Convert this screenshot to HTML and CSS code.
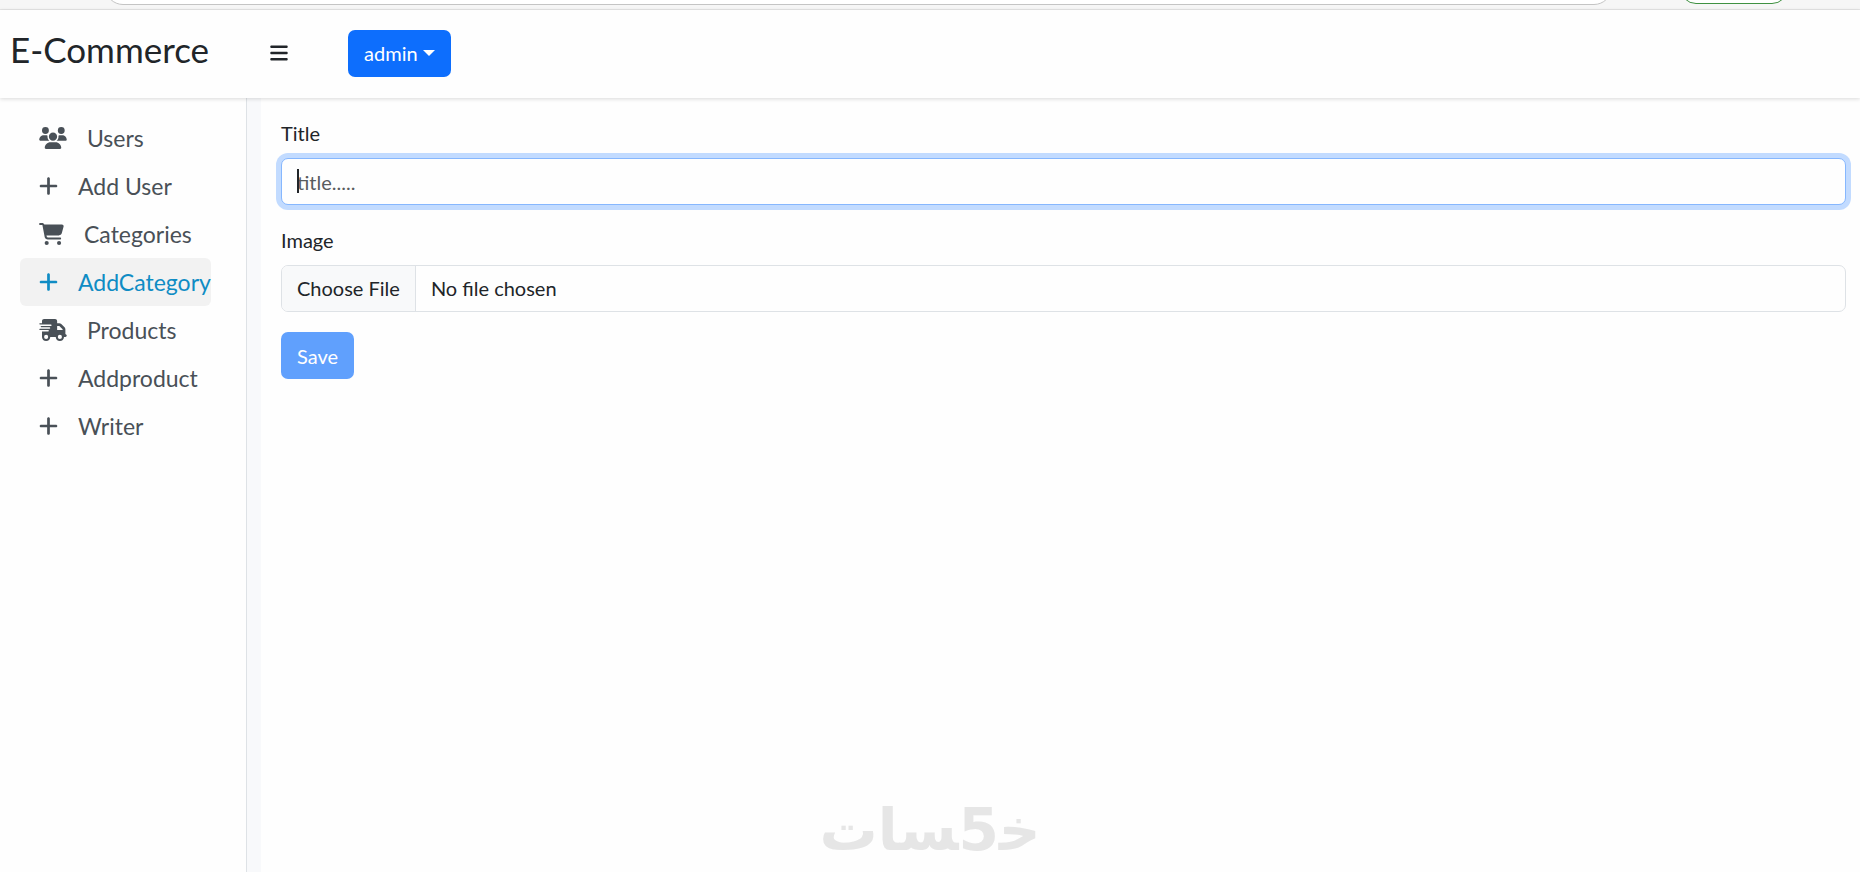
FILE: index.html
```html
<!DOCTYPE html>
<html lang="en">
<head>
  <meta charset="UTF-8" />
  <meta name="viewport" content="width=device-width, initial-scale=1" />
  <title>E-Commerce</title>
  <link rel="stylesheet" href="styles.css">
</head>
<body>

  <!-- shared icons -->
  <svg class="sprite" aria-hidden="true">
    <symbol id="icon-plus" viewBox="0 0 448 512">
      <path d="M256 80c0-17.7-14.3-32-32-32s-32 14.3-32 32V224H48c-17.7 0-32 14.3-32 32s14.3 32 32 32H192V432c0 17.7 14.3 32 32 32s32-14.3 32-32V288H400c17.7 0 32-14.3 32-32s-14.3-32-32-32H256V80z"/>
    </symbol>
  </svg>

  <div class="browser-bar">
    <div class="address"></div>
    <div class="profile"></div>
  </div>

  <header class="top-bar">
    <h1 class="brand">E-Commerce</h1>
    <button class="menu-toggle" type="button" aria-label="Toggle menu">
      <svg class="icon" width="18" height="20" viewBox="0 0 448 512"><path d="M0 96C0 78.3 14.3 64 32 64H416c17.7 0 32 14.3 32 32s-14.3 32-32 32H32C14.3 128 0 113.7 0 96zM0 256c0-17.7 14.3-32 32-32H416c17.7 0 32 14.3 32 32s-14.3 32-32 32H32c-17.7 0-32-14.3-32-32zM448 416c0 17.7-14.3 32-32 32H32c-17.7 0-32-14.3-32-32s14.3-32 32-32H416c17.7 0 32 14.3 32 32z"/></svg>
    </button>
    <button class="btn dropdown-toggle" type="button">admin</button>
  </header>

  <div class="layout">
    <nav class="side-bar">
      <a class="item-link" href="#">
        <svg class="icon" width="28" height="22" viewBox="0 0 640 512"><path d="M144 0a80 80 0 1 1 0 160A80 80 0 1 1 144 0zM512 0a80 80 0 1 1 0 160A80 80 0 1 1 512 0zM0 298.7C0 239.8 47.8 192 106.7 192h42.7c15.9 0 31 3.5 44.6 9.7c-1.3 7.2-1.9 14.7-1.9 22.3c0 38.2 16.8 72.5 43.3 96c-.2 0-.4 0-.7 0H21.3C9.6 320 0 310.4 0 298.7zM405.3 320c-.2 0-.4 0-.7 0c26.6-23.5 43.3-57.8 43.3-96c0-7.6-.7-15-1.9-22.3c13.6-6.3 28.7-9.7 44.6-9.7h42.7C592.2 192 640 239.8 640 298.7c0 11.8-9.6 21.3-21.3 21.3H405.3zM224 224a96 96 0 1 1 192 0 96 96 0 1 1 -192 0zM128 485.3C128 411.7 187.7 352 261.3 352H378.7C452.3 352 512 411.7 512 485.3c0 14.7-11.9 26.7-26.7 26.7H154.7c-14.7 0-26.7-11.9-26.7-26.7z"/></svg>
        <span>Users</span>
      </a>
      <a class="item-link" href="#">
        <svg class="icon" width="19" height="22"><use href="#icon-plus"/></svg>
        <span>Add User</span>
      </a>
      <a class="item-link" href="#">
        <svg class="icon" width="25" height="22" viewBox="0 0 576 512"><path d="M0 24C0 10.7 10.7 0 24 0H69.5c22 0 41.5 12.8 50.6 32h411c26.3 0 45.5 25 38.6 50.4l-41 152.3c-8.5 31.4-37 53.3-69.5 53.3H170.7l5.4 28.5c2.2 11.3 12.1 19.5 23.6 19.5H488c13.3 0 24 10.7 24 24s-10.7 24-24 24H199.7c-34.6 0-64.3-24.6-70.7-58.5L77.4 54.5c-.7-3.8-4-6.5-7.9-6.5H24C10.7 48 0 37.3 0 24zM128 464a48 48 0 1 1 96 0 48 48 0 1 1 -96 0zm336-48a48 48 0 1 1 0 96 48 48 0 1 1 0-96z"/></svg>
        <span>Categories</span>
      </a>
      <a class="item-link active" href="#">
        <svg class="icon" width="19" height="22"><use href="#icon-plus"/></svg>
        <span>AddCategory</span>
      </a>
      <a class="item-link" href="#">
        <svg class="icon" width="28" height="22" viewBox="0 0 640 512"><path d="M112 0C85.5 0 64 21.5 64 48V96H16c-8.8 0-16 7.2-16 16s7.2 16 16 16H64 272c8.8 0 16 7.2 16 16s-7.2 16-16 16H64 48c-8.8 0-16 7.2-16 16s7.2 16 16 16H64 240c8.8 0 16 7.2 16 16s-7.2 16-16 16H64 16c-8.8 0-16 7.2-16 16s7.2 16 16 16H64 208c8.8 0 16 7.2 16 16s-7.2 16-16 16H64V416c0 53 43 96 96 96s96-43 96-96H384c0 53 43 96 96 96s96-43 96-96h32c17.7 0 32-14.3 32-32s-14.3-32-32-32V288 256 237.3c0-17-6.7-33.3-18.7-45.3L512 114.7c-12-12-28.3-18.7-45.3-18.7H416V48c0-26.5-21.5-48-48-48H112zM544 237.3V256H416V160h50.7L544 237.3zM160 368a48 48 0 1 1 0 96 48 48 0 1 1 0-96zm272 48a48 48 0 1 1 96 0 48 48 0 1 1 -96 0z"/></svg>
        <span>Products</span>
      </a>
      <a class="item-link" href="#">
        <svg class="icon" width="19" height="22"><use href="#icon-plus"/></svg>
        <span>Addproduct</span>
      </a>
      <a class="item-link" href="#">
        <svg class="icon" width="19" height="22"><use href="#icon-plus"/></svg>
        <span>Writer</span>
      </a>
    </nav>

    <main class="content">
      <form>
        <div class="form-group">
          <label for="title">Title</label>
          <div class="field">
            <input class="form-control" id="title" type="text" placeholder="title....." autofocus>
            <span class="text-cursor"></span>
          </div>
        </div>
        <div class="form-group">
          <label for="image">Image</label>
          <input class="form-control" id="image" type="file">
        </div>
        <button class="btn" type="submit" disabled>Save</button>
      </form>
    </main>
  </div>

  <!-- watermark -->
  <div class="watermark" lang="ar" dir="rtl"><span>خ&zwj;</span><span>5</span><span>&zwj;سات</span></div>

</body>
</html>
```
FILE: styles.css
```css
* {
  box-sizing: border-box;
}
body {
  margin: 0;
  min-height: 100vh;
  display: flex;
  flex-direction: column;
  font-family: Lato, sans-serif;
  font-size: 20px;
  line-height: 30px;
  color: #212529;
  background: #fefefe;
}
.sprite {
  display: none;
}
.icon {
  flex-shrink: 0;
  fill: currentColor;
}

/* Browser edge */
.browser-bar {
  display: flex;
  align-items: flex-end;
  gap: 68px;
  height: 10px;
  padding: 0 72px 4px 105px;
  overflow: hidden;
  background: #f6f6f6;
  border-bottom: 1px solid #e6e6e6;
}
.address {
  flex: 1;
  height: 36px;
  flex-shrink: 0;
  background: white;
  border: 1px solid #c4c4c4;
  border-radius: 18px;
}
.profile {
  width: 108px;
  height: 32px;
  margin-bottom: 1px;
  background: white;
  border: 1px solid #3f9142;
  border-radius: 16px;
}

/* Top bar */
.top-bar {
  position: relative;
  display: flex;
  align-items: center;
  height: 88px;
  padding: 0 10px 2px;
  background: #fefefe;
  box-shadow: 0 1px 4px rgba(0, 0, 0, 0.15);
}
.brand {
  margin: 0 60px 8px 0;
  font-size: 35px;
  line-height: 42px;
  font-weight: 400;
}
.menu-toggle {
  display: flex;
  margin: 0 60px 0 1px;
  padding: 0;
  border: 0;
  background: none;
  color: #212529;
  cursor: pointer;
}

/* Buttons */
.btn {
  height: 47px;
  padding: 0 16px;
  border: 0;
  border-radius: 7px;
  background: #0d6efd;
  color: white;
  font: inherit;
  cursor: pointer;
}
.btn:disabled {
  opacity: 0.65;
  cursor: default;
}
.dropdown-toggle::after {
  content: "";
  display: inline-block;
  margin-left: 5px;
  vertical-align: 5px;
  border-top: 6px solid;
  border-right: 6px solid transparent;
  border-left: 6px solid transparent;
}

/* Layout */
.layout {
  flex: 1;
  display: flex;
  background: #f8f9fb;
}
.side-bar {
  width: 247px;
  flex-shrink: 0;
  padding: 16px 35px 16px 20px;
  background: #fefefe;
  border-right: 1px solid #dee2e6;
}
.item-link {
  display: flex;
  align-items: center;
  gap: 20px;
  height: 48px;
  padding-left: 19px;
  border-radius: 6px;
  font-size: 23px;
  color: #495057;
  text-decoration: none;
}
.item-link.active {
  color: #0f8cc4;
  background: #f2f2f2;
}
.content {
  flex: 1;
  margin-left: 14px;
  padding: 20px 14px 20px 20px;
  background: #fefefe;
}

/* Form */
.form-group {
  margin-bottom: 20px;
}
label {
  display: block;
  margin-bottom: 10px;
}
.field {
  position: relative;
}
.form-control {
  display: block;
  width: 100%;
  height: 47px;
  padding: 0 15px;
  border: 1px solid #dee2e6;
  border-radius: 7px;
  background: #fefefe;
  color: #212529;
  font: inherit;
  caret-color: transparent;
}
.form-control::placeholder {
  color: #595c5f;
}
.form-control:focus {
  border-color: #86b7fe;
  outline: 0;
  box-shadow: 0 0 0 5px #c2dbff;
}
.form-control[type="file"] {
  padding-left: 0;
  line-height: 45px;
  overflow: hidden;
}
.form-control::file-selector-button {
  height: 45px;
  margin: 0 15px 0 0;
  padding: 0 15px;
  border: 0;
  border-right: 1px solid #dee2e6;
  background: #f8f9fa;
  color: #212529;
  font: inherit;
}
/* text cursor of the focused field */
.text-cursor {
  position: absolute;
  top: 11px;
  left: 16px;
  width: 2px;
  height: 24px;
  background: #212529;
}

/* Watermark */
.watermark {
  position: fixed;
  right: 0;
  bottom: 12px;
  left: 0;
  display: flex;
  justify-content: center;
  align-items: baseline;
  font-family: "DejaVu Sans", sans-serif;
  font-size: 58px;
  line-height: 60px;
  font-weight: 700;
  color: #e6e6e6;
  pointer-events: none;
}
```
